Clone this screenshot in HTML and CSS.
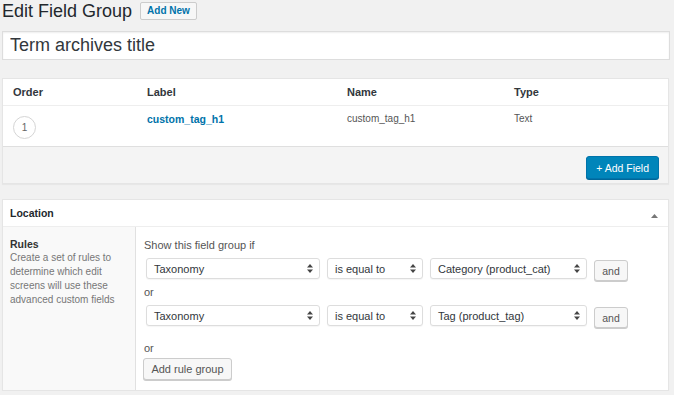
FILE: index.html
```html
<!DOCTYPE html>
<html lang="en">
<head>
    <meta charset="UTF-8">
    <meta name="viewport" content="width=device-width, initial-scale=1.0">
    <title>Edit Field Group</title>
    <link rel="stylesheet" href="styles.css">
</head>
<body>
    <div class="page-head">
        <h1>Edit Field Group</h1>
        <a class="page-action" href="#">Add New</a>
    </div>
    <input type="text" class="title-field" value="Term archives title">

    <div class="postbox fields-box">
        <div class="field-head">
            <div>Order</div>
            <div>Label</div>
            <div>Name</div>
            <div>Type</div>
        </div>
        <div class="field-row">
            <div><span class="order-num">1</span></div>
            <div><a class="field-label" href="#">custom_tag_h1</a></div>
            <div class="field-text">custom_tag_h1</div>
            <div class="field-text">Text</div>
        </div>
        <div class="field-foot">
            <a class="btn-primary" href="#">+ Add Field</a>
        </div>
    </div>

    <div class="postbox location-box">
        <div class="box-head">
            <h2>Location</h2>
            <svg class="toggle-arrow" width="7" height="4" viewBox="0 0 7 4"><polygon points="0,4 3.5,0 7,4" fill="#777"/></svg>
        </div>
        <div class="location-body">
            <div class="rules-label">
                <strong>Rules</strong>
                <p>Create a set of rules to determine which edit screens will use these advanced custom fields</p>
            </div>
            <div class="rules-main">
                <div class="rules-title">Show this field group if</div>
                <div class="rule-row">
                    <div class="select sel-param"><span>Taxonomy</span><svg width="6" height="9" viewBox="0 0 6 9"><polygon points="0,3.5 3,0 6,3.5" fill="#444"/><polygon points="0,5.5 3,9 6,5.5" fill="#444"/></svg></div>
                    <div class="select sel-op"><span>is equal to</span><svg width="6" height="9" viewBox="0 0 6 9"><polygon points="0,3.5 3,0 6,3.5" fill="#444"/><polygon points="0,5.5 3,9 6,5.5" fill="#444"/></svg></div>
                    <div class="select sel-value"><span>Category (product_cat)</span><svg width="6" height="9" viewBox="0 0 6 9"><polygon points="0,3.5 3,0 6,3.5" fill="#444"/><polygon points="0,5.5 3,9 6,5.5" fill="#444"/></svg></div>
                    <a class="btn and-btn" href="#">and</a>
                </div>
                <div class="or-text">or</div>
                <div class="rule-row">
                    <div class="select sel-param"><span>Taxonomy</span><svg width="6" height="9" viewBox="0 0 6 9"><polygon points="0,3.5 3,0 6,3.5" fill="#444"/><polygon points="0,5.5 3,9 6,5.5" fill="#444"/></svg></div>
                    <div class="select sel-op"><span>is equal to</span><svg width="6" height="9" viewBox="0 0 6 9"><polygon points="0,3.5 3,0 6,3.5" fill="#444"/><polygon points="0,5.5 3,9 6,5.5" fill="#444"/></svg></div>
                    <div class="select sel-value"><span>Tag (product_tag)</span><svg width="6" height="9" viewBox="0 0 6 9"><polygon points="0,3.5 3,0 6,3.5" fill="#444"/><polygon points="0,5.5 3,9 6,5.5" fill="#444"/></svg></div>
                    <a class="btn and-btn" href="#">and</a>
                </div>
                <div class="or-text or-last">or</div>
                <a class="btn group-btn" href="#">Add rule group</a>
            </div>
        </div>
    </div>
</body>
</html>
```

FILE: styles.css
```css
body {
    margin: 0;
    padding: 0 4px 0 2px;
    background: #f1f1f1;
    font-family: "Liberation Sans", Arial, sans-serif;
    color: #444;
}
a {
    text-decoration: none;
}
.page-head {
    display: flex;
    align-items: center;
    gap: 8px;
    height: 22px;
}
h1 {
    margin: 0;
    font-size: 18px;
    font-weight: normal;
    line-height: 22px;
    color: #23282d;
}
.page-action {
    font-size: 10px;
    font-weight: bold;
    color: #0073aa;
    background: #f7f7f7;
    border: 1px solid #ccc;
    border-radius: 2px;
    padding: 0 6px;
    line-height: 16px;
}
.title-field {
    display: block;
    box-sizing: border-box;
    width: 100%;
    height: 29px;
    margin: 9px 0 0;
    padding: 0 7px;
    border: 1px solid #ddd;
    background: #fff;
    box-shadow: inset 0 1px 2px rgba(0, 0, 0, 0.07);
    font-family: "Liberation Sans", Arial, sans-serif;
    font-size: 18px;
    color: #32373c;
}
.postbox {
    background: #fff;
    border: 1px solid #e5e5e5;
    box-shadow: 0 1px 1px rgba(0, 0, 0, 0.04);
    margin-right: 1px;
}
.fields-box {
    margin-top: 18px;
}
.field-head,
.field-row {
    display: grid;
    grid-template-columns: 134px 200px 167px 1fr;
}
.field-head > div,
.field-row > div {
    padding-left: 10px;
}
.field-head {
    height: 26px;
    align-items: center;
    border-bottom: 1px solid #eee;
    font-size: 11px;
    font-weight: bold;
    color: #32373c;
}
.field-row {
    padding: 6px 0;
    border-bottom: 1px solid #dfdfdf;
    font-size: 10px;
    line-height: 14px;
}
.order-num {
    display: flex;
    align-items: center;
    justify-content: center;
    width: 21px;
    height: 21px;
    margin-top: 4px;
    margin-bottom: 1px;
    border: 1px solid #d5d5d5;
    border-radius: 50%;
    color: #666;
    font-size: 10px;
}
.field-label {
    font-size: 10.5px;
    font-weight: bold;
    color: #0073aa;
}
.field-text {
    color: #555;
}
.field-foot {
    display: flex;
    justify-content: flex-end;
    padding: 9px 9px 4px;
    background: #f4f4f4;
}
.btn-primary {
    display: flex;
    align-items: center;
    height: 21px;
    padding: 0 9px;
    background: #0085ba;
    border: 1px solid #0073aa;
    border-radius: 3px;
    box-shadow: 0 1px 0 #006799;
    color: #fff;
    font-size: 10.5px;
}
.location-box {
    margin-top: 15px;
}
.box-head {
    display: flex;
    align-items: center;
    justify-content: space-between;
    height: 26px;
    padding: 0 10px 0 7px;
    border-bottom: 1px solid #eee;
}
.box-head h2 {
    margin: 0;
    font-size: 10.5px;
    font-weight: bold;
    color: #23282d;
}
.toggle-arrow {
    margin-top: 5px;
}
.location-body {
    display: flex;
}
.rules-label {
    box-sizing: border-box;
    width: 133px;
    padding: 10px 15px 10px 7px;
    background: #f9f9f9;
    border-right: 1px solid #e1e1e1;
    font-size: 10px;
    line-height: 14px;
}
.rules-label strong {
    display: block;
    font-size: 10.5px;
    color: #333;
}
.rules-label p {
    margin: 0;
    color: #777;
}
.rules-main {
    flex: 1;
    padding: 11px 12px 10px 8px;
    font-size: 11px;
    line-height: 14px;
    color: #555;
}
.rule-row {
    display: flex;
    align-items: flex-start;
    gap: 7px;
    margin-top: 6px;
    margin-left: 2px;
}
.select {
    box-sizing: border-box;
    display: flex;
    align-items: center;
    justify-content: space-between;
    height: 21px;
    padding: 0 6px 0 7px;
    background: #fff;
    border: 1px solid #ddd;
    border-radius: 3px;
    box-shadow: 0 1px 1px rgba(0, 0, 0, 0.04);
    font-size: 11px;
    color: #32373c;
}
.sel-param {
    width: 174px;
}
.sel-op {
    width: 96px;
}
.sel-value {
    width: 157px;
}
.btn {
    box-sizing: border-box;
    display: flex;
    align-items: center;
    justify-content: center;
    height: 21px;
    background: #f7f7f7;
    border: 1px solid #ccc;
    border-radius: 3px;
    box-shadow: 0 1px 0 #ccc;
    color: #555;
}
.and-btn {
    width: 34px;
    margin-top: 2px;
    font-size: 10.5px;
}
.or-text {
    margin-top: 4px;
}
.or-last {
    margin-top: 13px;
}
.group-btn {
    display: inline-flex;
    width: 89px;
    height: 22px;
    margin: 3px 0 0 -1px;
    font-size: 11px;
}
```
